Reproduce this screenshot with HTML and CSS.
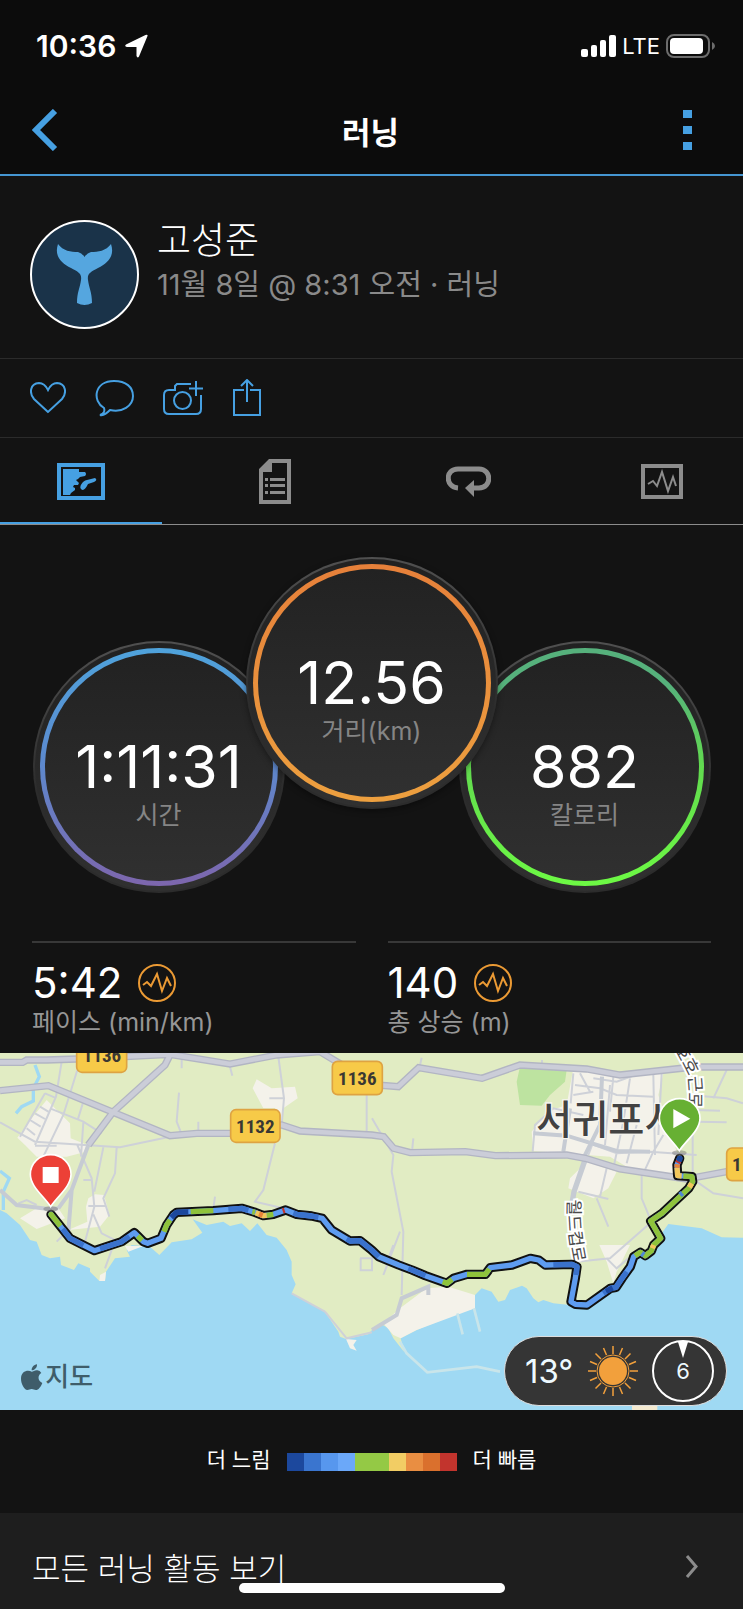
FILE: index.html
```html
<!DOCTYPE html>
<html lang="ko">
<head>
    <meta charset="UTF-8">
    <meta name="viewport" content="width=device-width, initial-scale=1.0">
    <title>러닝</title>
    <link rel="stylesheet" href="styles.css">
</head>
<body>
    <header class="top">
        <div class="status">
            <div class="status-left">
                <span class="clock">10:36</span>
                <svg width="24" height="24" viewBox="0 0 24 24" fill="#fff"><path d="M23.500 2 15 22.500q-1.500 2-2.500-.5V13H3q-3-.500-1-2.500L21.500 1q2.500-1 2 1z"/></svg>
            </div>
            <div class="status-right">
                <svg width="35" height="22" viewBox="0 0 35 22" fill="#fff"><rect x="0" y="14" width="7" height="8" rx="2"/><rect x="10" y="10" width="6" height="12" rx="2"/><rect x="19" y="5" width="6" height="17" rx="2"/><rect x="28" y="0" width="7" height="22" rx="2"/></svg>
                <span class="network">LTE</span>
                <svg width="49" height="24" viewBox="0 0 49 24"><rect x="1" y="1" width="42" height="22" rx="7" fill="none" stroke="#6d6d6d" stroke-width="2"/><rect x="4" y="4" width="33" height="16" rx="4" fill="#fff"/><path d="M46 8q3 1.500 3 4t-3 4z" fill="#6d6d6d"/></svg>
            </div>
        </div>
        <nav class="navbar">
            <button class="icon-btn" aria-label="뒤로"><svg width="27" height="42" viewBox="0 0 27 42"><path d="M23 2 4 21l19 19" fill="none" stroke="#46a0e2" stroke-width="6"/></svg></button>
            <h1>러닝</h1>
            <button class="icon-btn" aria-label="메뉴"><svg width="11" height="42" viewBox="0 0 11 42" fill="#46a0e2"><path d="M1 1h9v8H1zM1 17h9v8H1zM1 33h9v8H1z"/></svg></button>
        </nav>
    </header>

    <section class="profile">
        <svg class="avatar" viewBox="0 0 109 109"><circle cx="54.500" cy="54.500" r="53.500" fill="#1a3349" stroke="#fff" stroke-width="2"/><path fill="#55a6df" d="M28 24c5 7 13 8 20 8q4 1 6.500 5 2.500-4 6.500-5c7 0 15-1 20-8 4 12-3 19-13 24-7 4-11 5-10 12 1 8 4 12 4 23q-7.500 4-15 0c0-11 3-15 4-23 1-7-3-8-10-12-10-5-17-12-13-24z"/></svg>
        <div>
            <h2>고성준</h2>
            <p>11월 8일 @ 8:31 오전 · 러닝</p>
        </div>
    </section>

    <div class="actions">
        <button class="icon-btn" aria-label="좋아요"><svg width="36" height="32" viewBox="0 0 36 32"><path d="M18 30 4 17C-1 11 0 1.500 9 1c5 0 7 3 9 7 2-4 4-7 9-7 9 .5 10 10 5 16z"/></svg></button>
        <button class="icon-btn" aria-label="댓글"><svg width="39" height="37" viewBox="0 0 39 37"><path d="M9 28C-3 21-1 1 19 1c12 0 19 6 19 15 0 10-11 17-23 14-3 3-6 6-10 5 4-1 5-4 4-7z"/></svg></button>
        <button class="icon-btn" aria-label="사진 추가"><svg width="41" height="36" viewBox="0 0 41 36"><path d="M28 4H14l-2 2v4H6q-5 0-5 5v14q0 5 5 5h27q5 0 5-5V15M33 1v15M26 8.500h14"/><circle cx="19.500" cy="20.500" r="8.500"/></svg></button>
        <button class="icon-btn" aria-label="공유"><svg width="28" height="38" viewBox="0 0 28 38"><path d="M11 11H1v25h26V11H17M14 23V2M8 7l6-6 6 6"/></svg></button>
    </div>

    <div class="tabs" role="tablist">
        <button class="tab active" role="tab" aria-label="지도"><svg width="48" height="37" viewBox="0 0 48 37"><path d="M2 2h44v33H2z" fill="none" stroke="#46a0e2" stroke-width="4"/><path fill="#46a0e2" d="M6 6h16v3l6 0q2 2 0 4l-5 1-2 2-2 1 3 3-1 2h-4l-1 2 2 1v2l-4 3-1 2H6zM38 15q3 2-1 4l-6 2c-3 6-5 7-7 5s1-8 6-9z"/></svg></button>
        <button class="tab" role="tab" aria-label="세부 정보"><svg width="32" height="45" viewBox="0 0 32 45"><path fill="#8c8c8c" fill-rule="evenodd" d="M10 0h22v45H0V10zM13 4v9H4v28h24V4zM6 19h3v3H6zM11 19h15v3H11zM6 25h3v3H6zM11 25h15v3H11zM6 32h3v3H6zM11 32h15v3H11z"/></svg></button>
        <button class="tab" role="tab" aria-label="랩"><svg width="45" height="32" viewBox="0 0 45 32"><path d="M12 22C-1 21-1 3 12 3h21c13 0 13 19 0 19h-8" fill="none" stroke="#8c8c8c" stroke-width="5"/><path d="M19 22l9-8v17z" fill="#8c8c8c"/></svg></button>
        <button class="tab" role="tab" aria-label="차트"><svg width="42" height="35" viewBox="0 0 42 35" fill="none" stroke="#8c8c8c"><path d="M2 2h38v31H2z" stroke-width="4"/><path d="m7 20 5-3 4 5 5-14 6 19 5-14 3 9" stroke-width="2"/></svg></button>
    </div>

    <section class="dials">
        <div class="dial side">
            <div class="ring time"><strong>1:11:31</strong><span>시간</span></div>
        </div>
        <div class="dial main">
            <div class="ring distance"><strong>12.56</strong><span>거리(km)</span></div>
        </div>
        <div class="dial side">
            <div class="ring calories"><strong>882</strong><span>칼로리</span></div>
        </div>
    </section>

    <section class="stats">
        <div class="stat">
            <div class="stat-value">5:42 <svg width="38" height="38" viewBox="0 0 38 38"><circle cx="19" cy="19" r="18"/><path d="m5 21 4-3 4 4 6-12 5 17 5-13 4 8"/></svg></div>
            <div class="stat-label">페이스 (min/km)</div>
        </div>
        <div class="stat">
            <div class="stat-value">140 <svg width="38" height="38" viewBox="0 0 38 38"><circle cx="19" cy="19" r="18"/><path d="m5 21 4-3 4 4 6-12 5 17 5-13 4 8"/></svg></div>
            <div class="stat-label">총 상승 (m)</div>
        </div>
    </section>

    <section class="map">
        <svg class="map-canvas" viewBox="0 24 2229 1071">
            <rect y="24" width="2229" height="1071" fill="#9fd9f3"/>
            <!-- land -->
            <path fill="#e1ecc3" d="M0 24H2229V578L2165 577 2105 550 2005 537 1985 565 1960 610 1920 635 1895 655 1850 715 1790 755 1760 785 1660 775 1630 765 1615 772 1600 760 1580 730 1566 722 1530 735 1515 765 1495 770 1475 740 1445 730 1425 750 1425 790 1372 805 1250 855 1202 880 1212 920 1180 880 1165 850 1140 835 1116 855 1105 868 1038 882 1020 875 1015 860 975 800 875 745 887 718 875 690 875 650 860 615 830 578 800 570 772 535 750 558 725 535 690 543 670 530 620 540 578 523 607 563 575 583 515 592 478 630 450 605 395 600 380 615 390 635 345 640 318 680 315 708 298 708 270 680 270 670 235 655 222 675 183 660 180 635 150 640 125 630 110 590 90 585 60 540 20 505 0 495z"/>
            <!-- built-up areas, park, beaches -->
            <g fill="#f4f2ea">
                <path d="M140 165 210 235 212 280 262 300 258 320 200 335H110L75 300 52 278 95 220zM60 520 110 490 175 490 195 520 110 552zM265 460 285 448 312 450 328 510 300 545 205 555 262 530 258 485zM770 103 815 130 885 125 893 160 850 190 845 240 825 190 790 190 758 130zM1718 80 1990 85 1975 150 2040 350 2030 390 1880 365 1830 335 1600 318 1595 260 1640 200 1700 180zM1760 350 1850 380 1825 430 1780 460 1705 430 1710 400zM1798 600 1890 600 1850 680 1840 715 1820 650zM1345 725 1425 750 1425 790 1250 855 1202 880 1180 870 1150 835 1200 790 1280 730zM1038 882 1070 885 1060 900 1070 917 1050 910zM300 690 318 680 315 708 298 708zM375 603 430 603 385 620z"/>
            </g>
            <path fill="#f4ead0" d="M1896 1078h76v17h-76z"/>
            <path fill="#bde3a0" d="M1560 65 1700 75 1695 110 1650 150 1625 182 1560 180 1550 110z"/>
            <path d="M105 60 118 95 100 130V168L65 185 48 205M0 378 28 400 10 440V495" fill="none" stroke="#9fd9f3" stroke-width="10"/>
            <path d="M1372 805 1388 868M1422 790 1440 860M1200 890 1220 925 1282 982 1430 965 1500 980" fill="none" stroke="#c9e5ea" stroke-width="8"/>
            <!-- small streets -->
            <g fill="none" stroke="#ced1d8" stroke-width="6">
                <path d="M185 50 168 155 105 300M232 75 190 210 130 335M135 145 60 275M135 145 165 158M120 185 145 200M105 205 135 222M90 225 122 245M80 250 105 270M0 232 105 290 360 307 510 275M105 302H170M150 190 250 230 305 265M250 170 233 225M250 232 243 335M232 300 275 400 283 485 255 590M310 307 283 440M350 307 345 385 310 460 328 515M537 143 530 230 545 268M595 230V265M250 405H275M265 483H320M280 508 305 565 365 595M170 590 200 560M55 475 80 465 110 480M645 455 640 490M335 615 315 670"/>
                <path d="M835 35 852 160 845 240M808 160H852M825 295 790 435 765 470 850 490M1100 150V265M1116 220 1180 330 1175 380 1210 560 1205 750M690 65 697 92M545 35V70M1240 280 1236 320M1265 38 1258 70M1626 45V75"/>
                <path d="M1720 85 1712 175M1780 100 1850 110 1905 90M1725 120 1800 130 1850 150 1960 155M1720 150 1780 140M1740 85 1770 140M1840 95 1830 200M1890 100 1870 230M1960 90 1965 330M1985 85 1975 270M1600 265 1700 270 1850 325 1950 320 2090 330M1598 320 1605 240 1660 190 1750 210M1690 320 1700 260M1780 290 1765 330M1830 120 1815 300M1870 230 1840 370M1910 240 1880 355M1990 270 1960 320 1930 385"/>
                <path d="M2078 190V390M2000 270H2080M2090 230 2180 232M2085 195 2160 197M2070 150 2180 160 2229 175M2180 75 2140 160M1925 385V460L1950 520M2090 410 2140 445 2229 460M1820 370 1800 455M1735 440 1825 462M1790 460 1825 545M1950 535 1830 640 1730 650M1820 640 1850 670 1885 640M1080 640H1116V676H1082V640M1200 560 1150 690M1180 600 1160 655M975 800 875 745M975 800 1040 880 1116 862"/>
            </g>
            <g fill="none" stroke="#c6cbd3" stroke-width="12">
                <path d="M215 435 205 560M175 490 145 492 50 480 0 435M175 490 215 435 265 300M1116 855 1190 810 1205 760 1285 725V750M1806 95 1800 240 1750 340M1710 190 1690 320M1600 265 1700 272 1850 318 1950 320"/>
                <path d="M1755 345 1722 440 1715 480" stroke-width="16"/>
            </g>
            <!-- main roads -->
            <path fill="none" stroke="#b2b5c3" stroke-width="22" d="M0 52H68L80 45H140L230 42 510 28 690 57 830 30 960 20 1010 50 1130 120 1195 125 1256 68 1446 100 1560 60 1760 72 1860 90 2080 66H2229M0 137 145 122 510 272 590 265H690L845 240 900 258 1116 270 1151 275 1181 310 1231 323 1396 320 1486 332 1700 330 1756 340 1860 372 2060 402 2180 380M510 30 495 60 340 200 265 300"/>
            <path fill="none" stroke="#cbcdd8" stroke-width="14" d="M0 52H68L80 45H140L230 42 510 28 690 57 830 30 960 20 1010 50 1130 120 1195 125 1256 68 1446 100 1560 60 1760 72 1860 90 2080 66H2229M0 137 145 122 510 272 590 265H690L845 240 900 258 1116 270 1151 275 1181 310 1231 323 1396 320 1486 332 1700 330 1756 340 1860 372 2060 402 2180 380M510 30 495 60 340 200 265 300"/>
            <!-- labels -->
            <g class="shield">
                <rect x="230" y="-18" width="150" height="100" rx="16"/><text x="306" y="52">1136</text>
                <rect x="997" y="49" width="150" height="100" rx="16"/><text x="1072" y="119">1136</text>
                <rect x="692" y="194" width="148" height="98" rx="16"/><text x="766" y="263">1132</text>
                <rect x="2180" y="309" width="150" height="98" rx="16"/><text x="2254" y="379">1132</text>
            </g>
            <text class="city" x="1608" y="266">서귀포시</text>
            <path id="street-a" d="M1988 -50 2048 60Q2068 90 2068 130V240" fill="none"/>
            <text class="street"><textPath href="#street-a" startOffset="20">서호호근로</textPath></text>
            <path id="street-b" d="M1704 464Q1700 560 1724 665" fill="none"/>
            <text class="street"><textPath href="#street-b">월드컵로</textPath></text>
            <!-- route, coloured by pace -->
            <g fill="none" stroke-linejoin="round" stroke-linecap="round">
                <path stroke="#111" stroke-width="28" d="M153 508 210 580 283 617 365 590 403 563 430 590 443 595 483 580 500 540 520 510 530 502 640 497 725 490 765 502 790 512 820 508 857 495 890 508 935 513 967 520 995 555 1050 588 1080 587 1115 615 1136 635 1196 660 1236 675 1276 692 1341 715 1361 700 1401 688 1456 688 1471 668 1536 660 1591 640 1616 645 1636 660 1716 658 1731 665 1726 700 1713 770 1726 778 1761 780 1831 730 1848 727 1866 700 1891 665 1901 635 1921 622 1936 632 1954 618 1961 600 1982 580 1952 528 1986 505 2066 430 2078 410 2076 395 2033 392 2031 360 2039 340"/>
                <path stroke="#5e9cf0" stroke-width="16" d="M153 508 210 580 283 617 365 590 403 563 430 590 443 595 483 580 500 540 520 510 530 502 640 497 725 490 765 502 790 512 820 508 857 495 890 508 935 513 967 520 995 555 1050 588 1080 587 1115 615 1136 635 1196 660 1236 675 1276 692 1341 715 1361 700 1401 688 1456 688 1471 668 1536 660 1591 640 1616 645 1636 660 1716 658 1731 665 1726 700 1713 770 1726 778 1761 780 1831 730 1848 727 1866 700 1891 665 1901 635 1921 622 1936 632 1954 618 1961 600 1982 580 1952 528 1986 505 2066 430 2078 410 2076 395 2033 392 2031 360 2039 340"/>
                <g stroke-width="16" stroke-linecap="butt">
                    <path stroke="#3a72cc" d="M188 552 210 580 250 601M300 611 365 590 388 574M685 493 725 490 745 496M880 504 890 508 935 513 955 517M1040 582 1050 588 1080 587 1115 615 1136 635M1225 670 1276 692M1660 659 1716 658 1731 665 1729 690M1810 745 1831 730 1848 727 1866 700 1880 680"/>
                    <path stroke="#1c489d" d="M514 518 530 502 565 501M1818 739 1838 729M2036 348 2039 340"/>
                    <path stroke="#8fc33c" d="M153 508 181 543M413 573 426 586M492 560 500 540 510 525M572 500 640 497M757 500 765 502M800 511 820 508M1328 710 1341 715 1356 703M1401 688 1456 688 1468 672M1905 632 1921 622 1936 632 1954 618 1961 600 1982 580 1952 528 1986 505 2066 430 2078 410 2076 395 2050 393"/>
                    <path stroke="#f2c75c" d="M767 503 790 512 800 511M2045 393 2033 392 2031 368M1957 610 1961 600M2068 427 2075 415"/>
                    <path stroke="#e8843a" d="M777 507 788 511M2031 368 2032 358"/>
                    <path stroke="#c5342c" d="M848 498 854 496M2033 354 2036 348"/>
                    <path stroke="#4f86d4" d="M2040 450 2047 444M1925 625 1932 630"/>
                </g>
                <circle cx="153" cy="508" r="8" fill="#8fc33c"/>
                <circle cx="2039" cy="341" r="9" fill="#1c489d"/>
            </g>
            <!-- start and finish pins -->
            <g stroke="#fff" stroke-width="5">
                <ellipse cx="152" cy="492" rx="22" ry="8" fill="#777" stroke="none" opacity=".5"/>
                <path fill="#ec4037" d="M152 485C132 454 91 425 91 388a61 59 0 0 1 122 0C213 425 172 454 152 485z"/>
                <path fill="#fff" stroke="none" d="M128 366h48v48h-48z"/>
                <ellipse cx="2038" cy="324" rx="22" ry="8" fill="#777" stroke="none" opacity=".5"/>
                <path fill="#67b033" d="M2038 317C2018 286 1978 257 1978 220a61 59 0 0 1 122 0C2100 257 2058 286 2038 317z"/>
                <path fill="#fff" stroke="none" d="M2020 192v58l51-29z"/>
            </g>
            <!-- map provider -->
            <path fill="#3f5d6a" d="M111 958c1 9-7 19-16 18-1-8 7-17 16-18zM95 980c5 0 9-5 17-4q8 1 12 8c-13 8-10 24 3 30-5 13-12 21-19 21-5 0-8-3-13-3s-8 3-13 3c-9 0-19-19-19-34 0-24 22-28 32-21z"/>
            <text class="provider" x="136" y="1024">지도</text>
        </svg>
        <div class="weather">
            <span>13°</span>
            <svg width="50" height="50" viewBox="-25 -25 50 50" fill="none" stroke="#f2a03c">
                <circle r="14" fill="#f2a03c" stroke="none"/><circle r="16"/>
                <path stroke-width="1.500" d="M0-17V-25M0 17V25M-17 0H-25M17 0H25M12-12 17.500-17.500M-12-12-17.500-17.500M12 12 17.500 17.500M-12 12-17.500 17.500M6.500-16 9.500-23M-6.500-16-9.500-23M6.500 16 9.500 23M-6.500 16-9.500 23M16-6.500 23-9.500M-16-6.500-23-9.500M16 6.500 23 9.500M-16 6.500-23 9.500"/>
            </svg>
            <div class="wind">
                <svg width="10" height="16" viewBox="0 0 10 16"><path d="M0 0h10L5 16z" fill="#fff"/></svg>
                6
            </div>
        </div>
    </section>

    <div class="legend">
        <span>더 느림</span>
        <div class="scale"><i class="s1"></i><i class="s2"></i><i class="s3"></i><i class="s4"></i><i class="s5"></i><i class="s5"></i><i class="s6"></i><i class="s7"></i><i class="s8"></i><i class="s9"></i></div>
        <span>더 빠름</span>
    </div>

    <a class="more" href="#">
        모든 러닝 활동 보기
        <svg width="14" height="23" viewBox="0 0 14 23"><path d="m2 1 9 10.500L2 22" fill="none" stroke="#8c8c8c" stroke-width="3"/></svg>
    </a>
    <div class="home-bar"></div>
</body>
</html>
```
FILE: styles.css
```css
* {
    box-sizing: border-box;
}

body {
    position: relative;
    margin: 0;
    background-color: #131313;
    color: #fff;
    font-family: Inter, "Noto Sans CJK KR", sans-serif;
}

h1, h2, p {
    margin: 0;
}

svg {
    display: block;
    flex: none;
}

.icon-btn, .tab {
    padding: 0;
    border: 0;
    background: none;
}

/* status bar and title */
.top {
    background-color: #0c0c0c;
    border-bottom: 2px solid #4596d2;
}

.status {
    display: flex;
    justify-content: space-between;
    align-items: center;
    padding: 26px 28px 0 36px;
}

.status-left, .status-right {
    display: flex;
    align-items: center;
    gap: 8px;
    height: 40px;
}

.clock {
    font-size: 30px;
    font-weight: 600;
}

.network {
    font-size: 22px;
    font-weight: 400;
}

.status-right {
    gap: 6px;
}

.navbar {
    display: flex;
    justify-content: space-between;
    align-items: center;
    height: 108px;
    padding: 20px 50px 0 32px;
}

h1 {
    font-size: 31px;
    font-weight: 700;
}

/* athlete */
.profile {
    display: flex;
    gap: 18px;
    height: 183px;
    padding: 44px 30px 0;
    border-bottom: 1px solid #2b2b2b;
}

.avatar {
    width: 109px;
    height: 109px;
}

h2 {
    font-size: 37px;
    font-weight: 300;
    line-height: 42px;
}

.profile p {
    color: #8a8a8a;
    font-size: 29px;
    line-height: 46px;
}

.actions {
    display: flex;
    align-items: center;
    gap: 29px;
    height: 79px;
    padding: 0 30px;
    border-bottom: 1px solid #2b2b2b;
}

.actions svg {
    fill: none;
    stroke: #46a0e2;
    stroke-width: 2;
}

.tabs {
    display: flex;
    justify-content: space-between;
    height: 87px;
    border-bottom: 1px solid #8c8c8c;
}

.tab {
    display: flex;
    align-items: center;
    justify-content: center;
    width: 162px;
    padding-top: 3px;
    border-bottom: 2px solid transparent;
}

.tab.active {
    border-bottom-color: #46a0e2;
}

/* dials */
.dials {
    display: flex;
    justify-content: center;
    align-items: flex-end;
    padding: 32px 0 48px;
}

.dial {
    flex: none;
    width: 252px;
    height: 252px;
    padding: 5px;
    border: 2px solid transparent;
    border-radius: 50%;
    background: linear-gradient(#212121, #303030) padding-box, linear-gradient(#505050, #2c2c2c 60%) border-box;
}

.dial.main {
    position: relative;
    margin: 0 -39px 84px;
    box-shadow: 0 2px 6px rgba(0, 0, 0, .4);
}

.ring {
    height: 238px;
    padding-top: 80px;
    border: 5px solid transparent;
    border-radius: 50%;
    text-align: center;
}

.ring.time {
    background: linear-gradient(#222, #303030) padding-box, linear-gradient(#4fa3dc, #5b8bcf 45%, #7d66ad) border-box;
}

.ring.distance {
    background: linear-gradient(#222, #303030) padding-box, linear-gradient(#e6803a, #eda03f) border-box;
}

.ring.calories {
    background: linear-gradient(#222, #303030) padding-box, linear-gradient(#56b17c 15%, #62db4f 50%, #6dfa44) border-box;
}

.ring strong, .ring span {
    display: block;
}

.ring strong {
    font-size: 59px;
    font-weight: 400;
    line-height: 68px;
}

.ring span {
    color: #858585;
    font-size: 25px;
    line-height: 28px;
}

/* pace and climb */
.stats {
    display: grid;
    grid-template-columns: 1fr 1fr;
    gap: 32px;
    padding: 0 32px;
}

.stat {
    height: 112px;
    padding-top: 20px;
    border-top: 2px solid #383838;
}

.stat-value {
    display: flex;
    align-items: center;
    gap: 16px;
    font-size: 42px;
    line-height: 40px;
}

.stat-value svg {
    fill: none;
    stroke: #eb9a34;
    stroke-width: 2;
}

.stat-label {
    color: #969696;
    font-size: 25px;
    line-height: 38px;
}

/* map */
.map {
    position: relative;
}

.map-canvas {
    width: 100%;
}

.shield rect {
    fill: #f7ca48;
    stroke: #dea342;
    stroke-width: 5;
}

.shield text {
    fill: #3a3833;
    font-family: "Liberation Sans Narrow", "Roboto Condensed", Roboto, sans-serif;
    font-size: 57px;
    font-weight: 700;
    text-anchor: middle;
}

.city {
    fill: #424242;
    stroke: #f6f5ef;
    stroke-width: 8;
    paint-order: stroke;
    font-size: 118px;
    font-weight: 500;
}

.street {
    fill: #4a4a4a;
    stroke: #fff;
    stroke-width: 12;
    paint-order: stroke;
    font-size: 52px;
}

.provider {
    fill: #3f5d6a;
    font-size: 78px;
    font-weight: 500;
}

.weather {
    position: absolute;
    right: 16px;
    bottom: 4px;
    display: flex;
    align-items: center;
    justify-content: space-between;
    width: 223px;
    height: 70px;
    padding: 0 12px 0 20px;
    border: 1px solid #ddd;
    border-radius: 35px;
    background-color: #353535;
    color: #eefaff;
    font-size: 33px;
}

.wind {
    position: relative;
    width: 62px;
    height: 62px;
    border: 2px solid #fff;
    border-radius: 50%;
    font-size: 22px;
    line-height: 58px;
    text-align: center;
}

.wind svg {
    position: absolute;
    top: 0;
    left: 24px;
}

.legend {
    display: flex;
    align-items: center;
    justify-content: center;
    gap: 16px;
    height: 103px;
    font-size: 21px;
    line-height: 28px;
}

.legend span {
    padding-bottom: 4px;
}

.scale {
    display: flex;
}

.scale i {
    width: 17px;
    height: 18px;
}

.s1 { background-color: #1c489d; }
.s2 { background-color: #3a75cf; }
.s3 { background-color: #5797ee; }
.s4 { background-color: #6ba8f9; }
.s5 { background-color: #94c945; }
.s6 { background-color: #f2cd64; }
.s7 { background-color: #e98e42; }
.s8 { background-color: #da702d; }
.s9 { background-color: #c2342d; }

.more {
    display: flex;
    align-items: center;
    justify-content: space-between;
    height: 96px;
    padding: 10px 44px 0 32px;
    background-color: #1e1e1e;
    color: #fff;
    font-size: 31px;
    font-weight: 300;
    text-decoration: none;
}

.home-bar {
    position: absolute;
    bottom: 16px;
    left: 50%;
    width: 266px;
    height: 10px;
    border-radius: 5px;
    background-color: #fff;
    transform: translateX(-50%);
}
```
